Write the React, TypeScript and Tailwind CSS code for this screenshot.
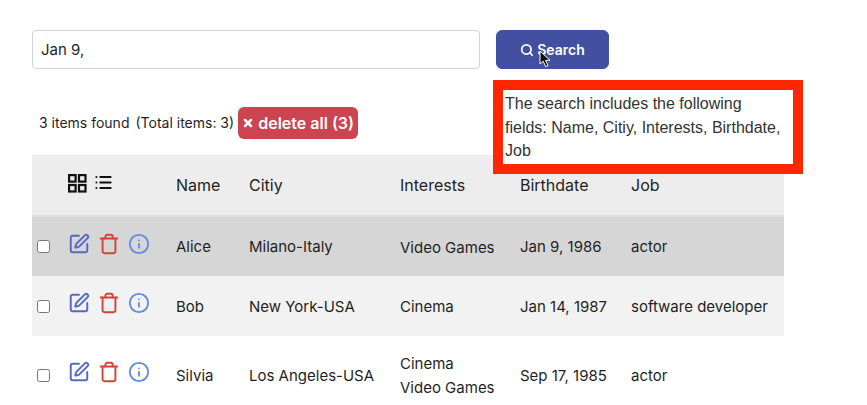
import { Info, List, Search, SquarePen, Trash, X } from 'lucide-react';

interface Person {
  name: string;
  city: string;
  interests: string[];
  birthdate: string;
  job: string;
  rowClass: string;
}

const people: Person[] = [
  { name: 'Alice', city: 'Milano-Italy', interests: ['Video Games'], birthdate: 'Jan 9, 1986', job: 'actor', rowClass: 'h-[60px] bg-[#d6d6d6]' },
  { name: 'Bob', city: 'New York-USA', interests: ['Cinema'], birthdate: 'Jan 14, 1987', job: 'software developer', rowClass: 'h-[60px] bg-[#f2f2f2]' },
  { name: 'Silvia', city: 'Los Angeles-USA', interests: ['Cinema', 'Video Games'], birthdate: 'Sep 17, 1985', job: 'actor', rowClass: 'h-[78px] bg-white' },
];

function GridIcon() {
  return (
    <svg width="19" height="19" viewBox="0 0 19 19" fill="none" stroke="#111" strokeWidth="2.2">
      <rect x="1.1" y="1.1" width="6.5" height="6.5" />
      <rect x="11" y="1.1" width="6.5" height="6.5" />
      <rect x="1.1" y="11" width="6.5" height="6.5" />
      <rect x="11" y="11" width="6.5" height="6.5" />
    </svg>
  );
}

function Cursor() {
  return (
    <svg className="absolute left-[42px] top-[19px]" width="14" height="18" viewBox="0 0 14 18">
      <path d="M1 1 L1 14 L4.2 11.2 L6.6 16.6 L9 15.6 L6.6 10.4 L11 10.2 Z" fill="#111" stroke="#fff" strokeWidth="1" />
    </svg>
  );
}

export default function App() {
  return (
    <div className="relative h-[405px] overflow-hidden bg-white pl-8 pt-[30px] font-['Inter',sans-serif] text-[15px] text-[#1f1f1f]">
      {/* Search bar */}
      <div className="flex gap-4">
        <input
          type="text"
          defaultValue="Jan 9,"
          className="h-[39px] w-[448px] rounded border border-[#ced4da] px-2 text-[15px] text-[#1f1f1f]"
        />
        <button className="relative flex h-[39px] w-[113px] items-center justify-center gap-[3px] rounded-md border border-[#3f51a3] bg-[#4350a2] text-sm font-semibold text-white">
          <Search className="h-[14px] w-[14px]" strokeWidth={3} />
          Search
          <Cursor />
        </button>
      </div>

      {/* Counter */}
      <div className="mt-[38px] flex h-8 items-center pl-[7px] text-sm">
        <span>3 items found</span>
        <span className="ml-[6px]">(Total items: 3)</span>
        <button className="ml-1 flex h-8 w-[120px] items-center justify-center gap-1 rounded-md bg-[#cb444f] text-base font-semibold text-white">
          <X className="h-3 w-3" strokeWidth={5} />
          delete all (3)
        </button>
      </div>

      {/* Table */}
      <table className="mt-4 w-[752px] table-fixed border-collapse">
        <colgroup>
          <col className="w-[34px]" />
          <col className="w-[100px]" />
          <col className="w-[74px]" />
          <col className="w-[150px]" />
          <col className="w-[120px]" />
          <col className="w-[111px]" />
          <col className="w-[163px]" />
        </colgroup>
        <thead>
          <tr className="h-[61px] border-b-2 border-[#dedede] bg-[#ededed] text-left text-base">
            <th />
            <th className="pb-1">
              <div className="flex items-center gap-[7px] pl-[2px]">
                <GridIcon />
                <List className="h-[19px] w-[19px] -translate-y-[1px] text-[#111]" strokeWidth={2.5} />
              </div>
            </th>
            <th className="pl-[10px] font-normal">Name</th>
            <th className="pl-[9px] font-normal">Citiy</th>
            <th className="pl-[10px] font-normal">Interests</th>
            <th className="pl-[10px] font-normal">Birthdate</th>
            <th className="pl-[10px] font-normal">Job</th>
          </tr>
        </thead>
        <tbody>
          {people.map((person) => (
            <tr key={person.name} className={person.rowClass}>
              <td className="pl-[5px]">
                <input type="checkbox" className="block h-[13px] w-[13px]" />
              </td>
              <td>
                <div className="flex -translate-y-[3px] items-center gap-2 pl-[2px]">
                  <SquarePen className="h-[22px] w-[22px] text-[#5469c4]" strokeWidth={2.1} />
                  <Trash className="h-[22px] w-[22px] text-[#d2443c]" strokeWidth={2.1} />
                  <Info className="h-[22px] w-[22px] text-[#5f8be0]" strokeWidth={2} />
                </div>
              </td>
              <td className="pl-[10px] pt-[2px]">{person.name}</td>
              <td className="pl-[9px] pt-[2px]">{person.city}</td>
              <td className="pl-[10px] pt-[2px] leading-6">
                {person.interests.map((interest) => (
                  <div key={interest}>{interest}</div>
                ))}
              </td>
              <td className="pl-[10px] pt-[2px]">{person.birthdate}</td>
              <td className="pl-[10px] pt-[2px]">{person.job}</td>
            </tr>
          ))}
        </tbody>
      </table>

      {/* Search fields tooltip */}
      <div className="absolute left-[493px] top-[80px] h-[94px] w-[310px] border-10 border-[#ff2600] bg-white pl-[2px] pr-[10px] pt-[2px] font-['Liberation_Sans',sans-serif] text-base leading-[23.5px] text-[#333]">
        The search includes the following fields: Name, Citiy, Interests, Birthdate, Job
      </div>
    </div>
  );
}
